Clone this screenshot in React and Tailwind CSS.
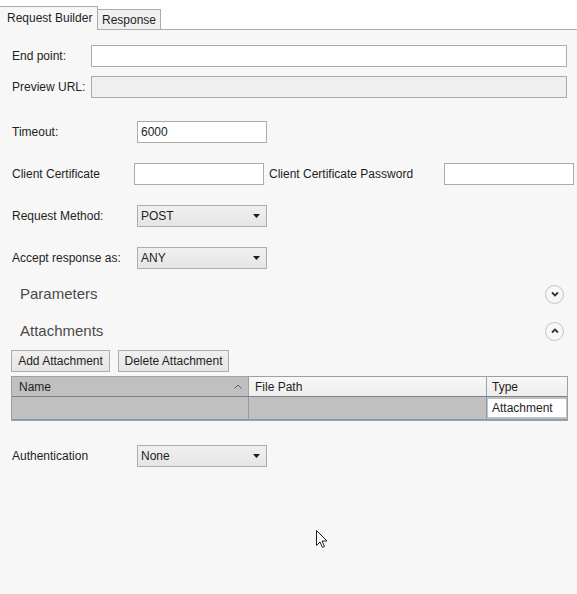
import React from 'react';

const font = { fontFamily: '"Liberation Sans", Arial, sans-serif' };

const Label = ({ children, w }) => (
  <div className={`${w} shrink-0 text-[12px] text-[#1e1e1e]`}>{children}</div>
);

const TextBox = ({ value = '', className = '' }) => (
  <div className={`h-[22px] border border-[#ababab] bg-white px-[3px] flex items-center text-[12px] text-[#1e1e1e] ${className}`}>
    {value}
  </div>
);

const Select = ({ value }) => (
  <div className="w-[130px] h-[22px] border border-[#acacac] bg-gradient-to-b from-[#f0f0f0] to-[#e5e5e5] flex items-center justify-between pl-[3px] pr-[6px] text-[12px] text-[#1e1e1e]">
    <span>{value}</span>
    <svg width="7" height="4" viewBox="0 0 7 4">
      <path d="M0 0 H7 L3.5 4 Z" fill="#1e1e1e" />
    </svg>
  </div>
);

const Expander = ({ title, open }) => (
  <div className="h-[24px] flex items-center justify-between pl-[20px] pr-[13px]">
    <span className="text-[15px] text-[#4a4a4a]">{title}</span>
    <div className="w-[19px] h-[19px] rounded-full border border-[#c4c4c4] bg-[#f7f7f7] flex items-center justify-center">
      <svg width="8" height="6" viewBox="0 0 8 6">
        {open ? (
          <path d="M1 4.5 L4 1.5 L7 4.5" fill="none" stroke="#333" strokeWidth="1.8" />
        ) : (
          <path d="M1 1.5 L4 4.5 L7 1.5" fill="none" stroke="#333" strokeWidth="1.8" />
        )}
      </svg>
    </div>
  </div>
);

const Button = ({ children, w }) => (
  <div className={`${w} h-[22px] border border-[#adadad] bg-gradient-to-b from-[#f0f0f0] to-[#e5e5e5] flex items-center justify-center text-[12px] text-[#1e1e1e]`}>
    {children}
  </div>
);

export default function App() {
  return (
    <div className="relative w-[577px] h-[594px] bg-white overflow-hidden flex flex-col" style={font}>
      {/* Tabs */}
      <div className="h-[30px] shrink-0 flex items-end border-b border-[#acacac]">
        <div className="relative z-10 -mb-px w-[98px] h-[24px] border-t border-r border-[#acacac] bg-[#f7f7f7] flex items-center pl-[7px] pb-[2px] text-[12px] text-[#1e1e1e]">
          Request Builder
        </div>
        <div className="w-[63px] h-[20px] border-t border-r border-[#acacac] bg-[#f0f0f0] flex items-center justify-center text-[12px] text-[#1e1e1e]">
          Response
        </div>
      </div>

      {/* Panel */}
      <div className="flex-1 bg-[#f7f7f7] flex flex-col">
        <div className="mt-[15px] flex items-center pl-[12px] pr-[10px]">
          <Label w="w-[79px]">End point:</Label>
          <TextBox className="flex-1" />
        </div>
        <div className="mt-[9px] flex items-center pl-[12px] pr-[10px]">
          <Label w="w-[79px]">Preview URL:</Label>
          <TextBox className="flex-1 !bg-[#efefef]" />
        </div>

        <div className="mt-[23px] flex items-center pl-[12px]">
          <Label w="w-[125px]">Timeout:</Label>
          <TextBox value="6000" className="w-[130px]" />
        </div>

        <div className="mt-[20px] flex items-center pl-[12px]">
          <Label w="w-[122px]">Client Certificate</Label>
          <TextBox className="w-[130px] shrink-0" />
          <div className="w-[180px] shrink-0 pl-[5px] text-[12px] text-[#1e1e1e]">Client Certificate Password</div>
          <TextBox className="w-[130px] shrink-0" />
        </div>

        <div className="mt-[20px] flex items-center pl-[12px]">
          <Label w="w-[125px]">Request Method:</Label>
          <Select value="POST" />
        </div>

        <div className="mt-[20px] flex items-center pl-[12px]">
          <Label w="w-[125px]">Accept response as:</Label>
          <Select value="ANY" />
        </div>

        <div className="mt-[13px]">
          <Expander title="Parameters" open={false} />
        </div>
        <div className="mt-[13px]">
          <Expander title="Attachments" open />
        </div>

        <div className="mt-[7px] flex gap-[8px] pl-[11px]">
          <Button w="w-[99px]">Add Attachment</Button>
          <Button w="w-[111px]">Delete Attachment</Button>
        </div>

        {/* Attachments grid */}
        <div className="mt-[4px] ml-[11px] w-[557px] border border-[#a0a0a0] flex flex-col text-[12px] text-[#1e1e1e]">
          <div className="h-[20px] flex border-b border-[#808080]">
            <div className="w-[237px] bg-[#c0c0c0] border-r border-[#a0a0a0] flex items-center justify-between pl-[7px] pr-[6px]">
              <span>Name</span>
              <svg width="8" height="5" viewBox="0 0 8 5">
                <path d="M0.5 4.5 L4 1 L7.5 4.5" fill="none" stroke="#606060" strokeWidth="1" />
              </svg>
            </div>
            <div className="w-[238px] bg-gradient-to-b from-[#f7f7f7] to-[#eeeeee] border-r border-[#a0a0a0] flex items-center pl-[6px]">
              File Path
            </div>
            <div className="flex-1 bg-gradient-to-b from-[#f7f7f7] to-[#eeeeee] flex items-center pl-[5px]">
              Type
            </div>
          </div>
          <div className="h-[23px] flex bg-[#c0c0c0] border-b border-[#7f9db9]">
            <div className="w-[237px] border-r border-[#8a9cb4]" />
            <div className="w-[238px] border-r border-[#7f9db9]" />
            <div className="flex-1 flex items-center px-px py-[2px]">
              <div className="h-full w-full bg-white flex items-center pl-[4px]">Attachment</div>
            </div>
          </div>
        </div>

        <div className="mt-[24px] flex items-center pl-[12px]">
          <Label w="w-[125px]">Authentication</Label>
          <Select value="None" />
        </div>
      </div>

      {/* Mouse cursor */}
      <svg className="absolute left-[316px] top-[530px]" width="12" height="19" viewBox="0 0 12 19">
        <path
          d="M0.5 0.5 L0.5 15.5 L4 12 L6.5 17.5 L8.5 16.5 L6 11 L11 11 Z"
          fill="white"
          stroke="#1e1e1e"
          strokeWidth="1"
          strokeLinejoin="round"
        />
      </svg>
    </div>
  );
}
